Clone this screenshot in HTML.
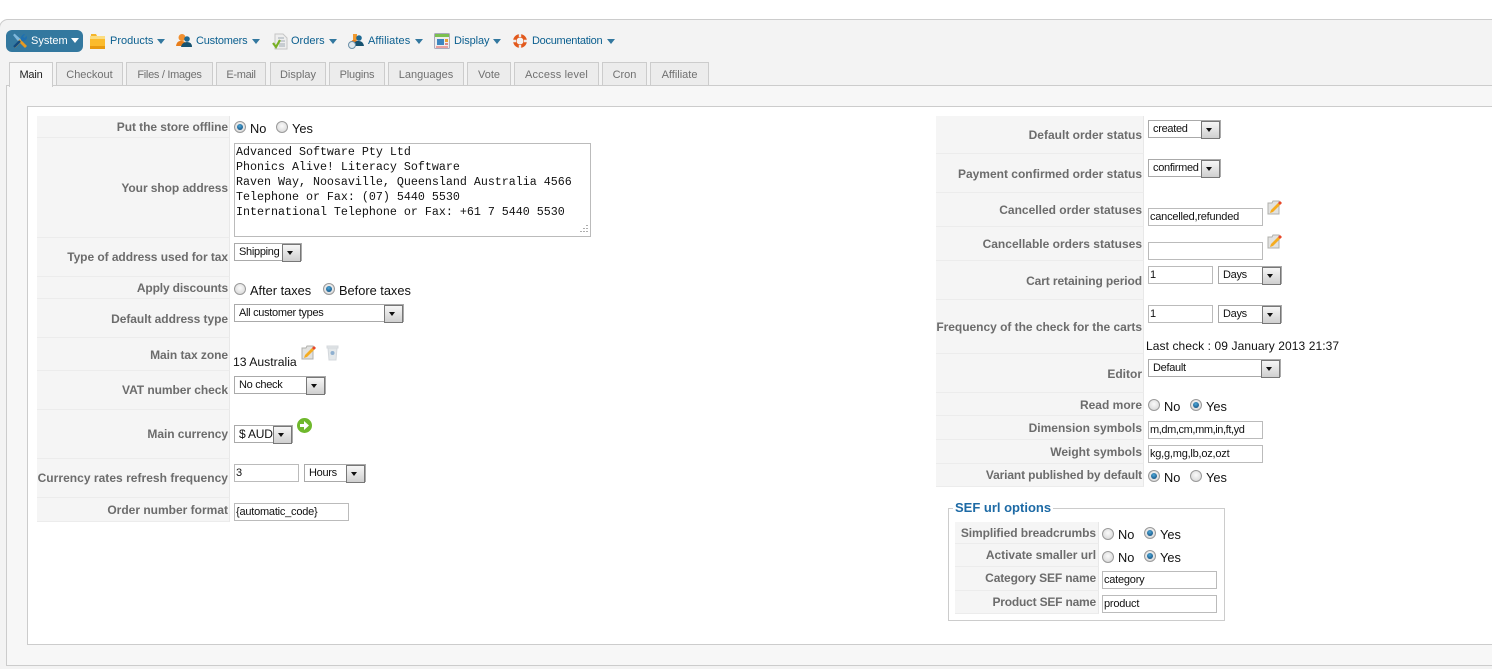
<!DOCTYPE html>
<html><head><meta charset="utf-8"><style>
html,body{margin:0;padding:0;width:1492px;height:669px;overflow:hidden;background:#fff}
body{position:relative;font-family:"Liberation Sans",Arial,sans-serif;font-size:12px;color:#111}
div,span,svg{position:absolute;box-sizing:border-box}
.m{top:34px;font-size:11px;color:#0b5f8f;white-space:nowrap;line-height:14px}
.c{width:0;height:0;border-left:4px solid transparent;border-right:4px solid transparent;border-top:5px solid #33789f;top:39px}
.t{top:62px;height:24px;background:#ececec;border:1px solid #ccc;color:#707070;font-size:11px;line-height:24px;text-align:center;white-space:nowrap}
.l{background:#f5f5f5;border-right:1px solid #e8e8e8;border-bottom:1px solid #ececec;text-align:right;font-weight:bold;color:#6c6c6c;font-size:12px;padding-right:1px;padding-top:1px;white-space:nowrap;letter-spacing:-.06px}
.rl{letter-spacing:0}
.sf{padding-right:2px}
.in{background:#fff;border:1px solid #bbb;height:18px;font-size:11px;line-height:17px;padding-left:1px;color:#111;white-space:nowrap;overflow:hidden;letter-spacing:-.22px}
.s{background:#fff;border:1px solid #aaa;height:18px;font-size:11px;line-height:17px;padding-left:4px;color:#111;white-space:nowrap;letter-spacing:-.3px}
.s i{position:absolute;right:0;top:0;width:17px;height:16px;background:linear-gradient(#f6f6f6,#cfcfcf);border:1px solid #777;display:block}
.s i:after{content:"";position:absolute;left:4px;top:6px;border-left:3.500px solid transparent;border-right:3.500px solid transparent;border-top:4px solid #111}
.r{width:12px;height:12px;border-radius:50%;border:1px solid #9a9a9a;background:radial-gradient(circle at 50% 40%,#fafafa,#d2d2d2)}
.r.o:after{content:"";position:absolute;left:2px;top:2px;width:6px;height:6px;border-radius:50%;background:radial-gradient(circle at 45% 35%,#4fa8d8,#063f70)}
.x{font-size:12.8px;color:#111;white-space:nowrap;line-height:14px}
</style></head><body>
<div style="left:-1px;top:19px;width:1494px;height:660px;background:#f3f3f3;border:1px solid #ccc;border-top-left-radius:9px"></div>
<div style="left:6px;top:85px;width:1490px;height:581px;background:#f7f7f7;border:1px solid #ccc"></div>
<div style="left:27px;top:106px;width:1470px;height:539px;background:#fff;border:1px solid #ccc"></div>
<div style="left:0;top:666px;width:1492px;height:3px;background:#f3f3f3"></div>

<!-- menu -->
<div style="left:6px;top:30px;width:77px;height:22px;background:#33789f;border-radius:6px"></div>
<svg style="left:12px;top:33px" width="16" height="16" viewBox="0 0 16 16"><path d="M1 2l2-1 4 4 2 3-1 2-3-3z" fill="#7fb8dc"/><path d="M7 9L2 14l1 1 5-5z" fill="#f0a020"/><path d="M9 7L2 1" stroke="#7fb8dc" stroke-width="1"/><path d="M15 13l-2 2L6 8l2-2z" fill="#e89a20"/><path d="M9 7Q8 3 12 1l1 .5-2 2 1.500 1.500 2-2 .5 1Q15 8 10 8z" fill="#1f6fb0"/><path d="M8 8L2 14" stroke="#124a80" stroke-width="2.400"/></svg>
<span class="m" style="left:31px;color:#fff">System</span>
<span class="c" style="left:71px;border-top-color:#fff;top:38px"></span>
<svg style="left:90px;top:33px" width="15" height="16" viewBox="0 0 15 16"><path d="M1 1h5l1 2h7l1 13H0z" fill="#f5b52a"/><rect y="3" width="15" height="3" fill="#fbdc80"/><rect y="6" width="15" height="10" fill="#fbbb2c"/><rect y="13" width="15" height="3" fill="#e89a10"/></svg>
<span class="m" style="left:110px">Products</span><span class="c" style="left:157px"></span>
<svg style="left:176px;top:33px" width="16" height="15" viewBox="0 0 16 15"><circle cx="6" cy="4.500" r="3.500" fill="#f09030"/><path d="M0 13q1-6 6-5 4 0 5 5z" fill="#e87d1a"/><circle cx="11" cy="6" r="2.800" fill="#1f6a94"/><path d="M5 14q1-5 6-5 5 0 5 5z" fill="#16516f"/></svg>
<span class="m" style="left:196px;letter-spacing:-.2px">Customers</span><span class="c" style="left:252px"></span>
<svg style="left:272px;top:33px" width="16" height="17" viewBox="0 0 16 17"><path d="M3 1h8l4 4v11H3z" fill="#eee" stroke="#c6c6c6"/><path d="M6 5h6M6 8h7M7 11h6M7 13h6" stroke="#a0aab4"/><path d="M1 10l3 4 4-7" stroke="#78b024" stroke-width="2.200" fill="none"/></svg>
<span class="m" style="left:291px">Orders</span><span class="c" style="left:329px"></span>
<svg style="left:348px;top:33px" width="16" height="16" viewBox="0 0 16 16"><path d="M5 1h4v6H5z" fill="#f09a30"/><path d="M3 11q0-5 4-4 3 0 4 4z" fill="#e87d1a"/><circle cx="11" cy="5" r="2.800" fill="#1f6a94"/><path d="M6 13q0-6 5-5 4 0 5 5z" fill="#16516f"/><circle cx="4" cy="12" r="3.500" fill="#dfe8ee" stroke="#6a8ea6"/></svg>
<span class="m" style="left:368px;letter-spacing:.1px">Affiliates</span><span class="c" style="left:415px"></span>
<svg style="left:434px;top:33px" width="16" height="16" viewBox="0 0 16 16"><rect x=".5" y=".5" width="15" height="15" rx="1" fill="#eee" stroke="#aab"/><rect x="1" y="1" width="14" height="3" fill="#7cc050"/><rect x="3" y="6" width="7" height="6" fill="#3d86c0"/><rect x="11" y="6" width="3" height="3" fill="#e8a030"/><rect x="11" y="10" width="3" height="2" fill="#d88"/><rect x="2" y="13" width="12" height="2" fill="#e8a0a0"/></svg>
<span class="m" style="left:454px;letter-spacing:-.1px">Display</span><span class="c" style="left:493px"></span>
<svg style="left:512px;top:33px" width="16" height="16" viewBox="0 0 16 16"><circle cx="8" cy="8" r="5.200" fill="none" stroke="#e2591c" stroke-width="3.400"/><path d="M8 1v3M8 12v3M1 8h3M12 8h3" stroke="#eee" stroke-width="2.400"/></svg>
<span class="m" style="left:532px;letter-spacing:-.28px">Documentation</span><span class="c" style="left:607px"></span>

<!-- tabs -->
<div class="t" style="left:9px;width:44px;background:#f7f7f7;border-bottom:0;height:25px;color:#222;letter-spacing:-.2px">Main</div>
<div class="t" style="left:56px;width:67px">Checkout</div>
<div class="t" style="left:126px;width:87px;letter-spacing:-.3px">Files / Images</div>
<div class="t" style="left:216px;width:50px;letter-spacing:-.3px">E-mail</div>
<div class="t" style="left:270px;width:56px">Display</div>
<div class="t" style="left:329px;width:56px;letter-spacing:-.2px">Plugins</div>
<div class="t" style="left:388px;width:76px">Languages</div>
<div class="t" style="left:467px;width:44px">Vote</div>
<div class="t" style="left:514px;width:85px;letter-spacing:.15px">Access level</div>
<div class="t" style="left:602px;width:45px">Cron</div>
<div class="t" style="left:650px;width:59px">Affiliate</div>

<!-- left labels -->
<div class="l" style="left:37px;top:116px;width:193px;height:22px;line-height:21px;letter-spacing:-.07px">Put the store offline</div>
<div class="l" style="left:37px;top:138px;width:193px;height:100px;line-height:99px;letter-spacing:-.07px">Your shop address</div>
<div class="l" style="left:37px;top:238px;width:193px;height:39px;line-height:37px">Type of address used for tax</div>
<div class="l" style="left:37px;top:277px;width:193px;height:22px;line-height:21px;letter-spacing:-.15px">Apply discounts</div>
<div class="l" style="left:37px;top:299px;width:193px;height:39px;line-height:39px">Default address type</div>
<div class="l" style="left:37px;top:338px;width:193px;height:33px;line-height:33px">Main tax zone</div>
<div class="l" style="left:37px;top:371px;width:193px;height:39px;line-height:37px">VAT number check</div>
<div class="l" style="left:37px;top:410px;width:193px;height:49px;line-height:47px">Main currency</div>
<div class="l" style="left:37px;top:459px;width:193px;height:39px;line-height:37px;letter-spacing:.03px">Currency rates refresh frequency</div>
<div class="l" style="left:37px;top:498px;width:193px;height:24px;line-height:23px;letter-spacing:0">Order number format</div>

<!-- left fields -->
<div class="r o" style="left:234px;top:121px"></div><span class="x" style="left:250px;top:122px">No</span>
<div class="r" style="left:276px;top:121px"></div><span class="x" style="left:292px;top:122px">Yes</span>
<div style="left:234px;top:143px;width:357px;height:94px;background:#fff;border:1px solid #bbb;font-family:'Liberation Mono',monospace;font-size:11.67px;line-height:15px;padding:1px;white-space:pre">Advanced Software Pty Ltd
Phonics Alive! Literacy Software
Raven Way, Noosaville, Queensland Australia 4566
Telephone or Fax: (07) 5440 5530
International Telephone or Fax: +61 7 5440 5530</div>
<svg style="left:576px;top:223px" width="13" height="12"><path d="M11 2v1M8 5v1M11 5v1M5 8v1M8 8v1M11 8v1" stroke="#999" stroke-width="1.600"/></svg>
<div class="s" style="left:234px;top:243px;width:68px">Shipping<i></i></div>
<div class="r" style="left:234px;top:283px"></div><span class="x" style="left:250px;top:284px">After taxes</span>
<div class="r o" style="left:323px;top:283px"></div><span class="x" style="left:339px;top:284px">Before taxes</span>
<div class="s" style="left:234px;top:304px;width:170px">All customer types<i></i></div>
<span class="x" style="left:233px;top:355px;font-size:12.200px">13 Australia</span>
<svg style="left:301px;top:345px" width="16" height="16" viewBox="0 0 16 16"><path d="M1 3h4l1-2h6v13H1z" fill="#e2e2e0" stroke="#b0b0ac"/><path d="M3 13l1-3 7-7 2 2-7 7z" fill="#f5ac20"/><path d="M11 3l2-2 2 2-2 2z" fill="#e8482a"/></svg>
<svg style="left:326px;top:345px" width="13" height="16" viewBox="0 0 13 16"><path d="M1 1h11v2H1zM2 3h9l-1 12H3z" fill="#e4e8ea" stroke="#d4d8dc"/><circle cx="6.500" cy="8" r="2" fill="#8fb0d0"/></svg>
<div class="s" style="left:234px;top:376px;width:92px">No check<i></i></div>
<div class="s" style="left:234px;top:425px;width:59px;font-size:12px;line-height:16px;letter-spacing:-.2px">$ AUD<i></i></div>
<svg style="left:297px;top:418px" width="15" height="15" viewBox="0 0 15 15"><circle cx="7.500" cy="7.500" r="7.500" fill="#6fb82c"/><path d="M3 6h4V3l5 4.500-5 4.500V9H3z" fill="#fff"/></svg>
<div class="in" style="left:234px;top:464px;width:65px">3</div>
<div class="s" style="left:304px;top:464px;width:62px">Hours<i></i></div>
<div class="in" style="left:234px;top:503px;width:115px">{automatic_code}</div>

<!-- right labels -->
<div class="l rl" style="left:936px;top:116px;width:208px;height:38px;line-height:37px">Default order status</div>
<div class="l rl" style="left:936px;top:154px;width:208px;height:39px;line-height:39px">Payment confirmed order status</div>
<div class="l rl" style="left:936px;top:193px;width:208px;height:34px;line-height:33px">Cancelled order statuses</div>
<div class="l rl" style="left:936px;top:227px;width:208px;height:34px;line-height:33px">Cancellable orders statuses</div>
<div class="l rl" style="left:936px;top:261px;width:208px;height:39px;line-height:39px;letter-spacing:-.1px">Cart retaining period</div>
<div class="l rl" style="left:936px;top:300px;width:208px;height:54px;line-height:53px;letter-spacing:-.03px">Frequency of the check for the carts</div>
<div class="l rl" style="left:936px;top:354px;width:208px;height:39px;line-height:39px">Editor</div>
<div class="l rl" style="left:936px;top:393px;width:208px;height:23px;line-height:22px">Read more</div>
<div class="l rl" style="left:936px;top:416px;width:208px;height:24px;line-height:23px">Dimension symbols</div>
<div class="l rl" style="left:936px;top:440px;width:208px;height:24px;line-height:23px">Weight symbols</div>
<div class="l rl" style="left:936px;top:464px;width:208px;height:23px;line-height:21px;letter-spacing:-.14px">Variant published by default</div>

<!-- right fields -->
<div class="s" style="left:1148px;top:120px;width:73px">created<i></i></div>
<div class="s" style="left:1148px;top:159px;width:73px">confirmed<i></i></div>
<div class="in" style="left:1148px;top:208px;width:115px">cancelled,refunded</div>
<svg style="left:1267px;top:200px" width="16" height="16" viewBox="0 0 16 16"><path d="M1 3h4l1-2h6v13H1z" fill="#e2e2e0" stroke="#b0b0ac"/><path d="M3 13l1-3 7-7 2 2-7 7z" fill="#f5ac20"/><path d="M11 3l2-2 2 2-2 2z" fill="#e8482a"/></svg>
<div class="in" style="left:1148px;top:242px;width:115px"></div>
<svg style="left:1267px;top:234px" width="16" height="16" viewBox="0 0 16 16"><path d="M1 3h4l1-2h6v13H1z" fill="#e2e2e0" stroke="#b0b0ac"/><path d="M3 13l1-3 7-7 2 2-7 7z" fill="#f5ac20"/><path d="M11 3l2-2 2 2-2 2z" fill="#e8482a"/></svg>
<div class="in" style="left:1148px;top:266px;width:65px">1</div>
<div class="s" style="left:1218px;top:266px;width:64px">Days<i></i></div>
<div class="in" style="left:1148px;top:305px;width:65px">1</div>
<div class="s" style="left:1218px;top:305px;width:64px">Days<i></i></div>
<span class="x" style="left:1146px;top:339px;font-size:12px;letter-spacing:.09px">Last check : 09 January 2013 21:37</span>
<div class="s" style="left:1148px;top:359px;width:133px">Default<i></i></div>
<div class="r" style="left:1148px;top:399px"></div><span class="x" style="left:1164px;top:400px">No</span>
<div class="r o" style="left:1190px;top:399px"></div><span class="x" style="left:1206px;top:400px">Yes</span>
<div class="in" style="left:1148px;top:421px;width:115px;letter-spacing:-.4px">m,dm,cm,mm,in,ft,yd</div>
<div class="in" style="left:1148px;top:445px;width:115px">kg,g,mg,lb,oz,ozt</div>
<div class="r o" style="left:1148px;top:470px"></div><span class="x" style="left:1164px;top:471px">No</span>
<div class="r" style="left:1190px;top:470px"></div><span class="x" style="left:1206px;top:471px">Yes</span>

<!-- SEF -->
<div style="left:948px;top:508px;width:277px;height:113px;border:1px solid #ccc"></div>
<div style="left:953px;top:500px;background:#fff;padding:0 2px;font-weight:bold;font-size:13px;color:#1d6aa5;line-height:16px;white-space:nowrap">SEF url options</div>
<div class="l sf" style="left:955px;top:522px;width:144px;height:22px;line-height:21px;letter-spacing:-.07px">Simplified breadcrumbs</div>
<div class="l sf" style="left:955px;top:544px;width:144px;height:23px;line-height:21px;letter-spacing:-.03px">Activate smaller url</div>
<div class="l sf" style="left:955px;top:567px;width:144px;height:24px;line-height:20px;letter-spacing:-.15px">Category SEF name</div>
<div class="l sf" style="left:955px;top:591px;width:144px;height:23px;line-height:21px;letter-spacing:-.2px">Product SEF name</div>
<div class="r" style="left:1102px;top:528px"></div><span class="x" style="left:1118px;top:528px">No</span>
<div class="r o" style="left:1144px;top:527px"></div><span class="x" style="left:1160px;top:528px">Yes</span>
<div class="r" style="left:1102px;top:551px"></div><span class="x" style="left:1118px;top:551px">No</span>
<div class="r o" style="left:1144px;top:550px"></div><span class="x" style="left:1160px;top:551px">Yes</span>
<div class="in" style="left:1102px;top:571px;width:115px">category</div>
<div class="in" style="left:1102px;top:595px;width:115px">product</div>
</body></html>
